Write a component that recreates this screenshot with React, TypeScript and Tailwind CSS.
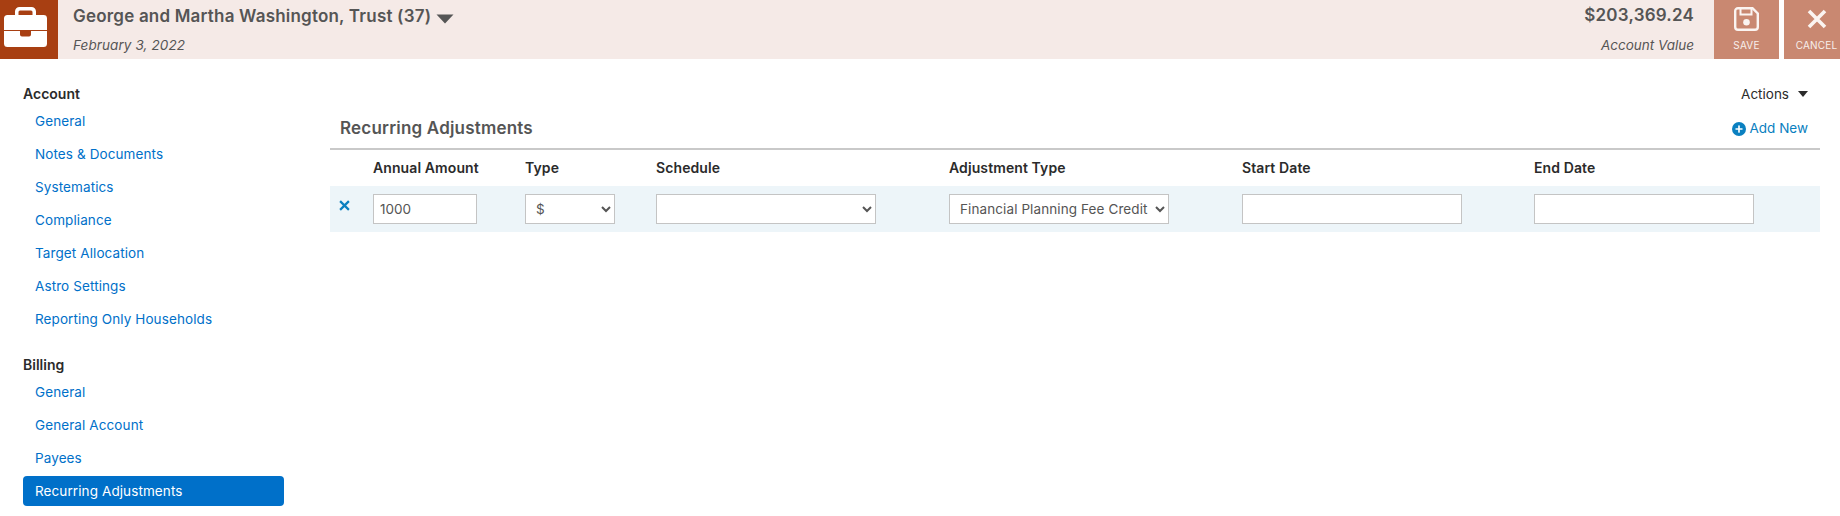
import { Plus } from "lucide-react";

const accountLinks = [
  "General",
  "Notes & Documents",
  "Systematics",
  "Compliance",
  "Target Allocation",
  "Astro Settings",
  "Reporting Only Households",
];

const billingLinks = ["General", "General Account", "Payees", "Recurring Adjustments"];

const labelColor = "text-[#2b2b2b]";
const fieldBorder = "border border-[#c4c4c4] bg-white";
const rowColumns = "grid-cols-[43px_152px_131px_293px_293px_292px_1fr]";

function Briefcase() {
  return (
    <svg width="43" height="40" viewBox="0 0 43 40" fill="#ffffff">
      <path d="M11 8V4.500A4.500 4.500 0 0 1 15.500 0h12A4.500 4.500 0 0 1 32 4.500V8h-3.500V5a1.500 1.500 0 0 0-1.500-1.500H16A1.500 1.500 0 0 0 14.500 5v3z" />
      <path d="M3.500 8h36A3.500 3.500 0 0 1 43 11.500V23H0V11.500A3.500 3.500 0 0 1 3.500 8z" />
      <path d="M0 24h16v3.500a2 2 0 0 0 2 2h7a2 2 0 0 0 2-2V24h16v12.500a3.500 3.500 0 0 1-3.500 3.500h-36A3.500 3.500 0 0 1 0 36.500z" />
    </svg>
  );
}

function SaveIcon() {
  return (
    <svg width="25" height="24" viewBox="0 0 25 24" fill="none" stroke="#fbf4f1" strokeWidth="2.400">
      <path d="M4 1.200h14.500l5.300 5.200V20a2.800 2.800 0 0 1-2.800 2.800H4A2.800 2.800 0 0 1 1.200 20V4A2.800 2.800 0 0 1 4 1.200z" />
      <path d="M6.500 1.200v6.200h11V1.200" strokeWidth="2" />
      <circle cx="12.500" cy="15.300" r="3.300" fill="#fbf4f1" stroke="none" />
    </svg>
  );
}

function CloseIcon({ size, stroke, width }: { size: number; stroke: string; width: number }) {
  return (
    <svg width={size} height={size} viewBox="0 0 20 20" fill="none" stroke={stroke} strokeWidth={width}>
      <path d="M2 2l16 16M18 2L2 18" />
    </svg>
  );
}

function HeaderButton({ label, children }: { label: string; children: React.ReactNode }) {
  return (
    <button className="flex h-[59px] w-[65px] shrink-0 flex-col items-center bg-[#c98871] pt-[7px]">
      <span className="flex h-[24px] items-center justify-center">{children}</span>
      <span className="mt-[8px] text-[10px] leading-[13px] tracking-[0.2px] text-[#f8efeb]">{label}</span>
    </button>
  );
}

function NavGroup({ title, links, active }: { title: string; links: string[]; active?: string }) {
  return (
    <div className="w-[261px]">
      <div className={`mb-[2px] text-sm leading-[20px] font-semibold ${labelColor}`}>{title}</div>
      <ul>
        {links.map((link) => (
          <li
            key={link}
            className={`mb-[3px] flex h-[30px] items-center rounded-[4px] pl-3 text-[13.500px] tracking-[0.1px] ${
              link === active ? "bg-[#0070c9] text-white" : "text-[#0070c9]"
            }`}
          >
            {link}
          </li>
        ))}
      </ul>
    </div>
  );
}

function SelectField({ width, value }: { width: string; value?: string }) {
  return (
    <select
      defaultValue={value}
      className={`h-[30px] pl-[6px] text-[13.500px] tracking-[0.1px] text-[#555555] ${fieldBorder} ${width}`}
    >
      <option>{value}</option>
    </select>
  );
}

export default function App() {
  return (
    <div className="h-[516px] w-[1840px] overflow-hidden bg-white font-['Inter',sans-serif]">
      <header className="flex h-[59px]">
        <div className="flex w-[58px] shrink-0 items-center justify-center bg-[#a83f12] pr-[7px] pb-[5px]">
          <Briefcase />
        </div>
        <div className="flex flex-1 justify-between bg-[#f5eae7] pr-[20px] pl-[15px] text-[#555555]">
          <div>
            <div className="mt-[5px] flex h-[24px] items-center text-[17px] font-semibold tracking-[0.2px]">
              George and Martha Washington, Trust (37)
              <svg className="mt-[3px] ml-[5px]" width="18" height="10" viewBox="0 0 18 10" fill="#555555">
                <path d="M0.500 0.500h17L9 9.500z" />
              </svg>
            </div>
            <div className="mt-[7px] text-[13.500px] leading-[18px] tracking-[0.1px] italic">February 3, 2022</div>
          </div>
          <div className="text-right">
            <div className="mt-[3px] h-[24px] text-[17px] leading-[24px] font-semibold tracking-[0.2px]">$203,369.24</div>
            <div className="mt-[9px] text-[13.500px] leading-[18px] italic">Account Value</div>
          </div>
        </div>
        <div className="flex w-[126px] shrink-0 gap-[5px] overflow-hidden bg-white">
          <HeaderButton label="SAVE">
            <SaveIcon />
          </HeaderButton>
          <HeaderButton label="CANCEL">
            <CloseIcon size={20} stroke="#fbf4f1" width={3.600} />
          </HeaderButton>
        </div>
      </header>

      <div className="flex">
        <nav className="flex w-[330px] flex-col gap-[18px] pt-[25px] pl-[23px]">
          <NavGroup title="Account" links={accountLinks} />
          <NavGroup title="Billing" links={billingLinks} active="Recurring Adjustments" />
        </nav>

        <main className="w-[1490px] pt-[25px]">
          <div className={`flex h-[20px] items-center justify-end gap-[9px] pr-[12px] text-[13.500px] ${labelColor}`}>
            Actions
            <svg width="10" height="6" viewBox="0 0 10 6" fill="#2b2b2b">
              <path d="M0 0h10L5 6z" />
            </svg>
          </div>
          <div className="mt-[5px] flex h-[41px] items-center justify-between border-b-2 border-[#c9c9c9] pr-[11px] pl-[10px]">
            <h2 className="text-[17px] font-semibold tracking-[0.2px] text-[#555555]">Recurring Adjustments</h2>
            <a className="mr-[1px] flex items-center gap-[4px] text-[13.500px] text-[#0a80c0]">
              <span className="flex h-[14px] w-[14px] items-center justify-center rounded-full bg-[#0a80c0]">
                <Plus size={10} color="white" strokeWidth={4} />
              </span>
              Add New
            </a>
          </div>
          <div className={`grid h-[36px] items-center text-sm font-semibold tracking-[0.1px] ${rowColumns} ${labelColor}`}>
            <span />
            <span>Annual Amount</span>
            <span>Type</span>
            <span>Schedule</span>
            <span>Adjustment Type</span>
            <span>Start Date</span>
            <span>End Date</span>
          </div>
          <div className={`grid h-[46px] items-center bg-[#edf5f9] ${rowColumns}`}>
            <span className="mb-[8px] pl-[9px]">
              <CloseIcon size={11} stroke="#0a80c0" width={4} />
            </span>
            <input
              readOnly
              value="1000"
              className={`h-[30px] w-[104px] pl-[6px] text-[13.500px] text-[#555555] ${fieldBorder}`}
            />
            <SelectField width="w-[90px]" value="$" />
            <SelectField width="w-[220px]" />
            <SelectField width="w-[220px]" value="Financial Planning Fee Credit" />
            <input readOnly className={`h-[30px] w-[220px] ${fieldBorder}`} />
            <input readOnly className={`h-[30px] w-[220px] ${fieldBorder}`} />
          </div>
        </main>
      </div>
    </div>
  );
}
